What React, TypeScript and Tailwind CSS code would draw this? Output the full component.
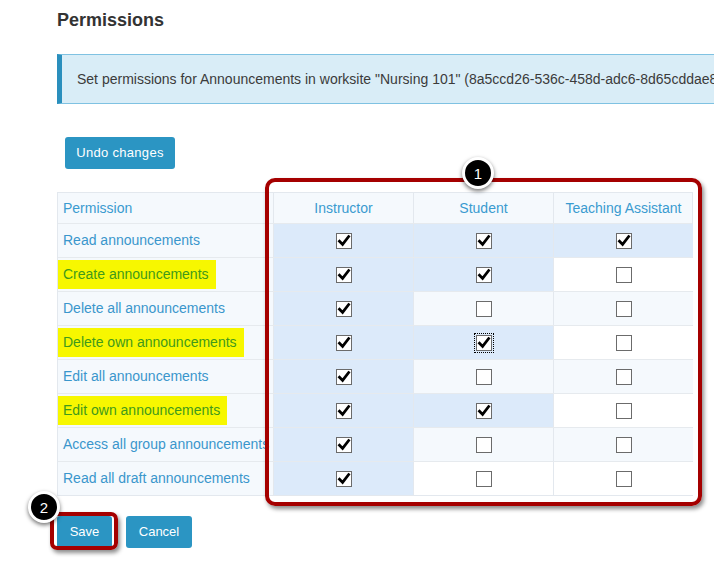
import React from "react";

const rows: { label: string; hl?: boolean; v: [boolean, boolean, boolean] }[] = [
  { label: "Read announcements", v: [true, true, true] },
  { label: "Create announcements", hl: true, v: [true, true, false] },
  { label: "Delete all announcements", v: [true, false, false] },
  { label: "Delete own announcements", hl: true, v: [true, true, false] },
  { label: "Edit all announcements", v: [true, false, false] },
  { label: "Edit own announcements", hl: true, v: [true, true, false] },
  { label: "Access all group announcements", v: [true, false, false] },
  { label: "Read all draft announcements", v: [true, false, false] },
];

function Box({ checked, focus }: { checked: boolean; focus?: boolean }) {
  return (
    <div className={focus ? "p-[1px] border border-dotted border-black" : ""}>
      <div className="w-[16px] h-[16px] border border-[#6b6b6b] bg-white flex items-center justify-center">
        {checked && (
          <svg width="14" height="14" viewBox="0 0 14 14">
            <path d="M2.5 7.2 L5.6 10.4 L11.6 2.6" fill="none" stroke="#000" strokeWidth="2.8" strokeLinecap="square" strokeLinejoin="miter" />
          </svg>
        )}
      </div>
    </div>
  );
}

function Badge({ n }: { n: string }) {
  return (
    <div className="w-[32px] h-[32px] rounded-full bg-black border-[3px] border-white shadow-[0_2px_4px_rgba(0,0,0,0.55)] flex items-center justify-center text-white text-[15px] leading-none" style={{ fontFamily: '"Liberation Sans", Arial, sans-serif' }}>
      {n}
    </div>
  );
}

export default function App() {
  return (
    <div className="relative w-[714px] h-[562px] overflow-hidden bg-white text-[#333]" style={{ fontFamily: '"Liberation Sans", Arial, sans-serif' }}>
      <div className="pl-[57px] pt-[10px]">
        <h1 className="text-[18px] leading-[21px] font-bold text-[#333]">Permissions</h1>
        <div className="mt-[23px] w-[720px] h-[50px] bg-[#d9edf7] border border-[#7fc2e2] border-l-[5px] border-l-[#2a8fbd] flex items-center pl-[15px] text-[14px] text-[#3b3b3b] whitespace-nowrap">
          Set permissions for Announcements in worksite "Nursing 101" (8a5ccd26-536c-458d-adc6-8d65cddae8f1)
        </div>
        <button className="mt-[33px] ml-[8px] h-[32px] w-[110px] rounded-[3px] bg-[#2b95c3] text-white text-[13px] tracking-[0.3px] flex items-center justify-center">
          Undo changes
        </button>
        <div className="mt-[23px] w-[636px] border border-[#e3e8ee] text-[14px]">
          <div className="grid grid-cols-[215px_140px_140px_140px] h-[30px] bg-[#f5f9fd] text-[#3a9bd0]">
            <div className="flex items-center pl-[5px]">Permission</div>
            <div className="flex items-center justify-center border-l border-[#e3e8ee]">Instructor</div>
            <div className="flex items-center justify-center border-l border-[#e3e8ee]">Student</div>
            <div className="flex items-center justify-center border-l border-[#e3e8ee]">Teaching Assistant</div>
          </div>
          {rows.map((r, i) => {
            const stripe = i % 2 === 0 ? "bg-[#f5f9fd]" : "bg-white";
            return (
              <div key={r.label} className="grid grid-cols-[215px_140px_140px_140px] h-[34px] border-t border-[#e6eaee]">
                <div className="flex items-center bg-[#f5f9fd] whitespace-nowrap overflow-hidden">
                  {r.hl ? (
                    <span className="bg-[#f7f700] text-[#3f9a1c] pl-[5px] pr-[7px] py-[6px] leading-[17px]">{r.label}</span>
                  ) : (
                    <span className="pl-[5px] text-[#3a96cc]">{r.label}</span>
                  )}
                </div>
                {r.v.map((c, j) => (
                  <div key={j} className={`flex items-center justify-center border-l border-[#e3e8ee] ${c ? "bg-[#dceafa]" : stripe}`}>
                    <Box checked={c} focus={i === 3 && j === 1} />
                  </div>
                ))}
              </div>
            );
          })}
        </div>
        <div className="mt-[20px] flex items-center gap-[14px]">
          <button className="h-[32px] w-[55px] rounded-[3px] bg-[#2b95c3] text-white text-[13px] flex items-center justify-center">Save</button>
          <button className="h-[32px] w-[66px] rounded-[3px] bg-[#2b95c3] text-white text-[13px] flex items-center justify-center">Cancel</button>
        </div>
      </div>

      {/* annotations */}
      <div className="absolute left-[265px] top-[178px] w-[437px] h-[328px] border-[4px] border-[#a50000] rounded-[10px] shadow-[2px_3px_4px_rgba(0,0,0,0.45)] pointer-events-none" />
      <div className="absolute left-[462px] top-[157px]">
        <Badge n="1" />
      </div>
      <div className="absolute left-[50px] top-[512px] w-[68px] h-[38px] border-[4px] border-[#a50000] rounded-[7px] shadow-[2px_3px_4px_rgba(0,0,0,0.45)] pointer-events-none" />
      <div className="absolute left-[28px] top-[491px]">
        <Badge n="2" />
      </div>
    </div>
  );
}
